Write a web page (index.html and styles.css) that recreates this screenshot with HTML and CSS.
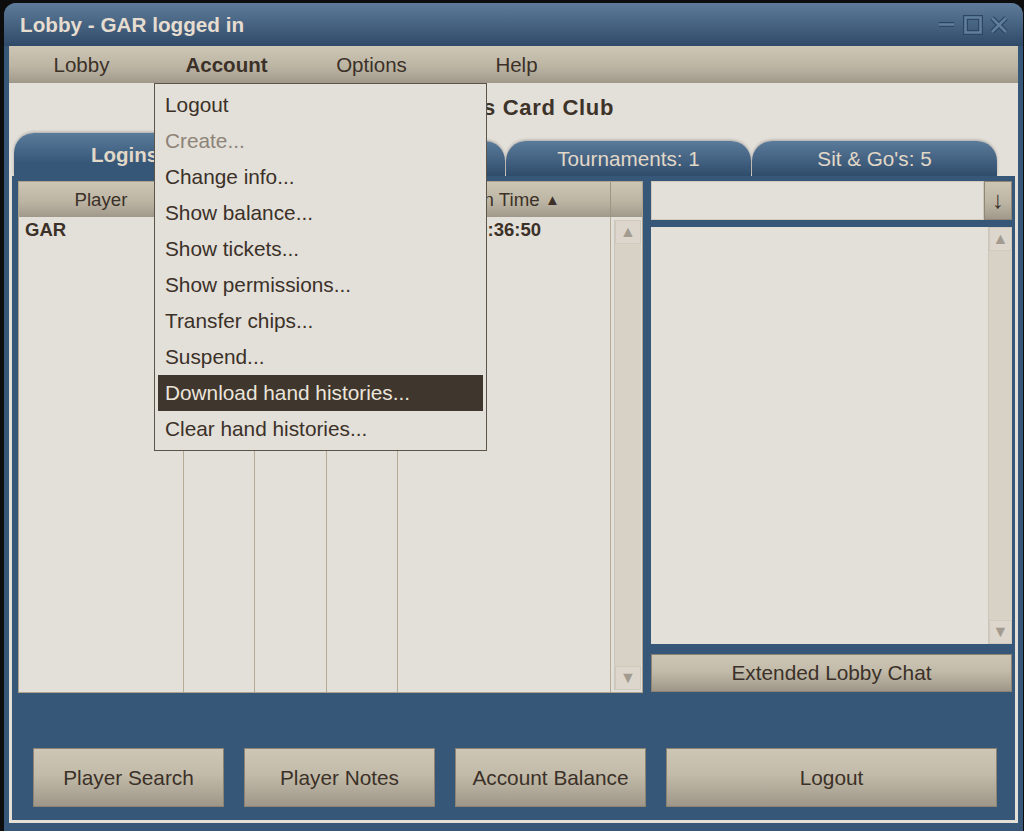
FILE: index.html
```html
<!DOCTYPE html>
<html lang="en">
<head>
    <meta charset="UTF-8">
    <title>Lobby - GAR logged in</title>
    <link rel="stylesheet" href="styles.css">
</head>
<body>
    <div class="window">
        <div class="titlebar">
            <span class="title">Lobby - GAR logged in</span>
            <svg class="controls" width="72" height="20" viewBox="0 0 72 20">
                <g fill="none" stroke="#2b4562" stroke-width="5">
                    <line x1="2" y1="9.5" x2="17" y2="9.5"/>
                    <rect x="28.5" y="2.5" width="15" height="15"/>
                    <line x1="55" y1="3" x2="69" y2="17"/>
                    <line x1="69" y1="3" x2="55" y2="17"/>
                </g>
                <g fill="none" stroke="#5f7e9d" stroke-width="2.6">
                    <line x1="2" y1="9.5" x2="17" y2="9.5"/>
                    <rect x="28.5" y="2.5" width="15" height="15"/>
                    <line x1="55" y1="3" x2="69" y2="17"/>
                    <line x1="69" y1="3" x2="55" y2="17"/>
                </g>
            </svg>
        </div>

        <div class="menubar">
            <div class="menu-item">Lobby</div>
            <div class="menu-item open">
                Account
                <!-- open account menu -->
                <ul class="dropdown">
                    <li>Logout</li>
                    <li class="disabled">Create...</li>
                    <li>Change info...</li>
                    <li>Show balance...</li>
                    <li>Show tickets...</li>
                    <li>Show permissions...</li>
                    <li>Transfer chips...</li>
                    <li>Suspend...</li>
                    <li class="selected">Download hand histories...</li>
                    <li>Clear hand histories...</li>
                </ul>
            </div>
            <div class="menu-item">Options</div>
            <div class="menu-item">Help</div>
        </div>

        <div class="content">
            <div class="club-title">Robert's Card Club</div>

            <div class="tabs">
                <div class="tab active">Logins: 1</div>
                <div class="tab"></div>
                <div class="tab">Tournaments: 1</div>
                <div class="tab">Sit &amp; Go's: 5</div>
            </div>

            <div class="panel">
                <div class="panel-main">
                    <div class="players">
                        <div class="players-head">
                            <div class="head-cell">Player</div>
                            <div class="head-cell"></div>
                            <div class="head-cell"></div>
                            <div class="head-cell"></div>
                            <div class="head-cell">Login Time <span class="sort">&#9650;</span></div>
                            <div class="head-cell"></div>
                        </div>
                        <div class="players-body">
                            <div class="col col-name"><div class="cell">GAR</div></div>
                            <div class="col"></div>
                            <div class="col"></div>
                            <div class="col"></div>
                            <div class="col col-time"><div class="cell">20:36:50</div></div>
                            <div class="col col-scroll">
                                <div class="scrollbar">
                                    <div class="scroll-btn">&#9650;</div>
                                    <div class="scroll-btn">&#9660;</div>
                                </div>
                            </div>
                        </div>
                    </div>

                    <div class="chat">
                        <div class="chat-input">
                            <div class="input-box"></div>
                            <div class="arrow-btn">&#8595;</div>
                        </div>
                        <div class="chat-log">
                            <div class="chat-text"></div>
                            <div class="scrollbar chat-scroll">
                                <div class="scroll-btn">&#9650;</div>
                                <div class="scroll-btn">&#9660;</div>
                            </div>
                        </div>
                        <div class="button chat-btn">Extended Lobby Chat</div>
                    </div>
                </div>

                <div class="actions">
                    <div class="button small">Player Search</div>
                    <div class="button small">Player Notes</div>
                    <div class="button small">Account Balance</div>
                    <div class="button wide">Logout</div>
                </div>
            </div>
        </div>
    </div>
</body>
</html>
```

FILE: styles.css
```css
* {
    box-sizing: border-box;
}

body {
    margin: 0;
    padding: 0;
    height: 831px;
    overflow: hidden;
    background-color: #0d0d0d;
    font-family: "Liberation Sans", Arial, sans-serif;
    color: #3b3128;
}

/* window frame */
.window {
    margin: 3px 0 0 4px;
    width: 1019px;
    height: 828px;
    padding: 0 5px 8px;
    background-color: #365777;
    border-radius: 12px 12px 0 0;
    display: flex;
    flex-direction: column;
}

.titlebar {
    margin: 0 -5px;
    height: 43px;
    flex: none;
    padding: 0 14px 0 16px;
    border-radius: 12px 12px 0 0;
    background: linear-gradient(#5e7c9a, #2e4a68);
    display: flex;
    align-items: center;
    justify-content: space-between;
}

.title {
    color: #e6ddd0;
    font-weight: bold;
    font-size: 20.7px;
}

/* menu bar */
.menubar {
    height: 37px;
    flex: none;
    display: flex;
    background: linear-gradient(#cec6b5, #bdb5a4 55%, #a0988a);
}

.menu-item {
    width: 145px;
    line-height: 37px;
    text-align: center;
    font-size: 20.5px;
    position: relative;
}

.menu-item.open {
    font-weight: bold;
}

.dropdown {
    position: absolute;
    top: 37px;
    left: 0;
    z-index: 5;
    width: 333px;
    margin: 0;
    padding: 3px 0;
    list-style: none;
    background-color: #e3dfd9;
    border: 1px solid #5c5349;
    text-align: left;
    font-weight: normal;
}

.dropdown li {
    height: 36px;
    line-height: 36px;
    margin: 0 3px;
    padding: 0 7px;
    font-size: 20.8px;
}

.dropdown li.disabled {
    color: #8d8377;
}

.dropdown li.selected {
    background-color: #3f362d;
    color: #ebe5dc;
}

/* main content */
.content {
    flex: 1;
    padding: 0 3px 3px;
    background-color: #e3dfd9;
    display: flex;
    flex-direction: column;
}

.club-title {
    height: 50px;
    line-height: 50px;
    padding-right: 11px;
    text-align: center;
    font-size: 22px;
    letter-spacing: 0.7px;
    font-weight: bold;
    color: #3d3329;
}

.tabs {
    height: 43px;
    padding-left: 2px;
    display: flex;
    align-items: flex-end;
    gap: 1px;
}

.tab {
    width: 245px;
    height: 35px;
    border-radius: 20px 20px 0 0;
    background: linear-gradient(#5b7b9b, #2f4c6b);
    box-shadow: 0 -1px 3px rgba(0, 0, 0, 0.25);
    color: #e2d8c8;
    font-size: 20.7px;
    display: flex;
    align-items: center;
    justify-content: center;
}

.tab.active {
    height: 43px;
    font-weight: bold;
    font-size: 20.5px;
    background: linear-gradient(#5b7b9b, #365777 70%);
}

.panel {
    flex: 1;
    padding-top: 5px;
    background-color: #365777;
    display: flex;
    flex-direction: column;
}

.panel-main {
    height: 512px;
    padding: 0 3px 0 6px;
    display: flex;
    gap: 8px;
}

/* players table */
.players {
    width: 625px;
    border: 1px solid #aea38f;
    background-color: #e3dfd9;
    display: flex;
    flex-direction: column;
}

.players-head,
.players-body {
    display: grid;
    grid-template-columns: 165px 71px 72px 71px 213px 31px;
}

.players-head {
    height: 35px;
    background: linear-gradient(#cec6b5, #bdb5a4 55%, #a0988a);
}

.head-cell {
    border-right: 1px solid #9f947f;
    font-size: 18.7px;
    line-height: 35px;
    text-align: center;
}

.head-cell:last-child {
    border-right: none;
}

.sort {
    font-size: 15px;
    vertical-align: 1px;
}

.players-body {
    flex: 1;
}

.col {
    border-right: 1px solid #b5aa96;
}

.col:last-child {
    border-right: none;
}

.cell {
    height: 26px;
    line-height: 26px;
    font-size: 18.5px;
    font-weight: bold;
}

.col-name .cell {
    padding-left: 6px;
}

.col-time .cell {
    text-align: center;
}

.col-scroll {
    padding: 3px 1px 2px 3px;
}

.scrollbar {
    height: 100%;
    background-color: #d8d1c5;
    border-left: 1px solid #cdc6b9;
    display: flex;
    flex-direction: column;
    justify-content: space-between;
}

.scroll-btn {
    height: 24px;
    background-color: #dcd6cc;
    border: 1px solid #d0c9bd;
    color: #a39b8f;
    font-size: 16px;
    line-height: 22px;
    text-align: center;
}

/* chat */
.chat {
    width: 361px;
    display: flex;
    flex-direction: column;
}

.chat-input {
    height: 39px;
    display: flex;
}

.input-box {
    flex: 1;
    background-color: #e3dfd9;
    border: 1px solid #cfc8bb;
}

.arrow-btn {
    width: 28px;
    border: 1px solid #8f8676;
    background: linear-gradient(#cec6b5, #bdb5a4 55%, #a0988a);
    font-size: 24px;
    font-weight: 300;
    line-height: 36px;
    text-align: center;
}

.chat-log {
    height: 417px;
    margin-top: 7px;
    background-color: #e3dfd9;
    display: flex;
}

.chat-text {
    flex: 1;
}

.chat-scroll {
    width: 24px;
    flex: none;
}

.button {
    border: 1px solid #8c8373;
    background: linear-gradient(#cec6b5, #c3bba9 45%, #9e9688);
    font-size: 20.8px;
    display: flex;
    align-items: center;
    justify-content: center;
}

.chat-btn {
    height: 38px;
    margin-top: 10px;
}

/* bottom buttons */
.actions {
    height: 59px;
    margin-top: 55px;
    padding-left: 21px;
    display: flex;
    gap: 20px;
}

.button.small {
    width: 191px;
}

.button.wide {
    width: 331px;
}
```
